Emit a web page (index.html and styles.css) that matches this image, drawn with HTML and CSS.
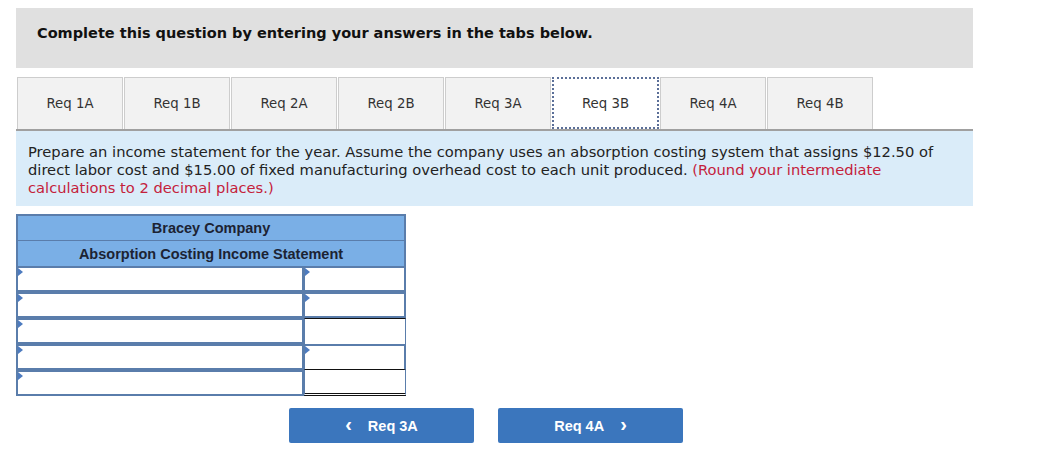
FILE: index.html
```html
<!DOCTYPE HTML>
<html>

<head>
    <meta charset='utf-8'>
    <link rel="stylesheet" href="styles.css">
</head>

<body>
    <div class="page">

        <!--標題-->
        <div class="intro">Complete this question by entering your answers in the tabs below.</div>

        <!--分頁-->
        <div class="tabBar">
            <div class="tab">Req 1A</div>
            <div class="tab">Req 1B</div>
            <div class="tab">Req 2A</div>
            <div class="tab">Req 2B</div>
            <div class="tab">Req 3A</div>
            <div class="tab active">Req 3B</div>
            <div class="tab">Req 4A</div>
            <div class="tab">Req 4B</div>
        </div>

        <!--說明-->
        <div class="prompt">
            Prepare an income statement for the year. Assume the company uses an absorption costing system that assigns $12.50 of
            direct labor cost and $15.00 of fixed manufacturing overhead cost to each unit produced.
            <span class="hint">(Round your intermediate calculations to 2 decimal places.)</span>
        </div>

        <!--報表-->
        <div class="sheet">
            <div class="sheetHead">Bracey Company</div>
            <div class="sheetHead">Absorption Costing Income Statement</div>

            <div class="entry"><span class="marker"></span></div>
            <div class="entry amount"><span class="marker"></span></div>

            <div class="entry"><span class="marker"></span></div>
            <div class="entry amount"><span class="marker"></span></div>

            <div class="entry"><span class="marker"></span></div>
            <div class="fixed subtotal"></div>

            <div class="entry"><span class="marker"></span></div>
            <div class="entry amount closing"><span class="marker"></span></div>

            <div class="entry"><span class="marker"></span></div>
            <div class="fixed total"></div>
        </div>

        <!--換頁按鈕-->
        <div class="navRow">
            <div class="navBtn"><span class="chev">&lsaquo;</span>Req 3A</div>
            <div class="navBtn">Req 4A<span class="chev right">&rsaquo;</span></div>
        </div>

    </div>
</body>

</html>
```

FILE: styles.css
```css
body {
    margin: 0px;
    padding: 0px;
    background-color: white;
    font-family: "DejaVu Sans", Verdana, sans-serif;
    color: #222;
}

.page {
    width: 957px;
    padding-left: 16px;
    padding-top: 8px;
}

.intro {
    height: 60px;
    box-sizing: border-box;
    padding: 17px 21px 0px;
    background-color: #e0e0e0;
    font-size: 14.5px;
    font-weight: bold;
    color: #111;
}

.tabBar {
    display: flex;
    gap: 1px;
    margin-top: 9px;
    padding-left: 1px;
    border-bottom: 2px solid #a0a0a0;
}

.tab {
    width: 106px;
    height: 52px;
    box-sizing: border-box;
    display: flex;
    align-items: center;
    justify-content: center;
    background-color: #f2f2f2;
    border: 1px solid #cdcdcd;
    border-bottom: none;
    font-size: 13.3px;
    color: #333;
}

.tab.active {
    background-color: white;
    border: 2px dotted #5b6f98;
    width: 107px;
}

.prompt {
    background-color: #daecf9;
    padding: 12px 12px 10px;
    font-size: 14.7px;
    line-height: 18px;
    color: #222;
    height: 75px;
    box-sizing: border-box;
}

.hint {
    color: #c4213b;
}

.sheet {
    margin-top: 8px;
    width: 390px;
    display: grid;
    grid-template-columns: 288px 102px;
    grid-auto-rows: 26px;
    font-family: "Liberation Sans", Arial, sans-serif;
}

.sheetHead {
    grid-column: 1 / 3;
    display: flex;
    align-items: center;
    justify-content: center;
    box-sizing: border-box;
    background-color: #7aafe6;
    border: 2px solid #5a7dab;
    border-top-width: 1px;
    border-bottom: none;
    font-size: 14.5px;
    font-weight: bold;
    color: #1c2333;
}

.sheetHead:first-child {
    border-top-width: 2px;
}

.entry {
    position: relative;
    box-sizing: border-box;
    border: 2px solid #5a7dab;
    background-color: white;
}

.entry.amount {
    border-left-width: 1px;
}

.entry.closing {
    border-bottom: 1px solid #111;
}

.marker {
    position: absolute;
    left: 0px;
    top: 0px;
    width: 0px;
    height: 0px;
    border-top: 4px solid transparent;
    border-bottom: 4px solid transparent;
    border-left: 5px solid #4d7bbf;
}

.fixed {
    box-sizing: border-box;
    border-left: 1px solid #5a7dab;
    border-right: 1px solid #5a7dab;
}

.subtotal {
    border-top: 1px solid #111;
}

.total {
    border-bottom: 3px double #111;
}

.navRow {
    display: flex;
    gap: 24px;
    padding-left: 273px;
    margin-top: 12px;
}

.navBtn {
    width: 185px;
    height: 35px;
    display: flex;
    align-items: center;
    justify-content: center;
    background-color: #3b76bd;
    border-radius: 2px;
    color: white;
    font-family: "Liberation Sans", Arial, sans-serif;
    font-weight: bold;
    font-size: 14.5px;
}

.chev {
    font-size: 20px;
    margin-right: 16px;
    margin-top: -3px;
}

.chev.right {
    margin-right: 0px;
    margin-left: 16px;
}
```
